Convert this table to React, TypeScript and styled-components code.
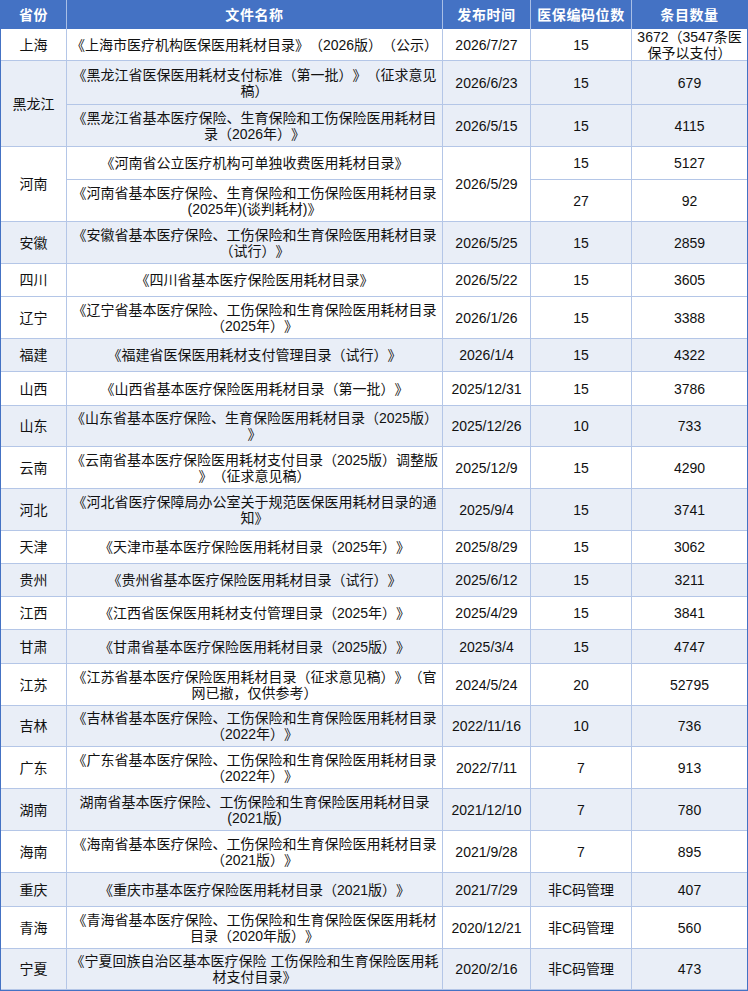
import { Fragment } from "react";
import styled, { createGlobalStyle } from "styled-components";

const GlobalStyle = createGlobalStyle`
  html, body {
    margin: 0;
    padding: 0;
    background: #ffffff;
  }
`;

type Sub = {
  title: string[];
  date?: string;
  code: string;
  count: string[];
  h: number;
};

type Entry = {
  province: string;
  stripe: boolean;
  sharedDate?: string;
  subs: Sub[];
};

const HEAD_H = 29;

const data: Entry[] = [
  {
    province: "上海",
    stripe: false,
    subs: [
      {
        title: ["《上海市医疗机构医保医用耗材目录》（2026版）（公示）"],
        date: "2026/7/27",
        code: "15",
        count: ["3672（3547条医", "保予以支付）"],
        h: 32,
      },
    ],
  },
  {
    province: "黑龙江",
    stripe: true,
    subs: [
      {
        title: ["《黑龙江省医保医用耗材支付标准（第一批）》（征求意见", "稿）"],
        date: "2026/6/23",
        code: "15",
        count: ["679"],
        h: 44,
      },
      {
        title: ["《黑龙江省基本医疗保险、生育保险和工伤保险医用耗材目", "录（2026年）》"],
        date: "2026/5/15",
        code: "15",
        count: ["4115"],
        h: 42,
      },
    ],
  },
  {
    province: "河南",
    stripe: false,
    sharedDate: "2026/5/29",
    subs: [
      {
        title: ["《河南省公立医疗机构可单独收费医用耗材目录》"],
        code: "15",
        count: ["5127"],
        h: 33,
      },
      {
        title: ["《河南省基本医疗保险、生育保险和工伤保险医用耗材目录", "(2025年)(谈判耗材)》"],
        code: "27",
        count: ["92"],
        h: 42,
      },
    ],
  },
  {
    province: "安徽",
    stripe: true,
    subs: [
      {
        title: ["《安徽省基本医疗保险、工伤保险和生育保险医用耗材目录", "（试行）》"],
        date: "2026/5/25",
        code: "15",
        count: ["2859"],
        h: 42,
      },
    ],
  },
  {
    province: "四川",
    stripe: false,
    subs: [
      {
        title: ["《四川省基本医疗保险医用耗材目录》"],
        date: "2026/5/22",
        code: "15",
        count: ["3605"],
        h: 33,
      },
    ],
  },
  {
    province: "辽宁",
    stripe: false,
    subs: [
      {
        title: ["《辽宁省基本医疗保险、工伤保险和生育保险医用耗材目录", "（2025年）》"],
        date: "2026/1/26",
        code: "15",
        count: ["3388"],
        h: 42,
      },
    ],
  },
  {
    province: "福建",
    stripe: true,
    subs: [
      {
        title: ["《福建省医保医用耗材支付管理目录（试行）》"],
        date: "2026/1/4",
        code: "15",
        count: ["4322"],
        h: 33,
      },
    ],
  },
  {
    province: "山西",
    stripe: false,
    subs: [
      {
        title: ["《山西省基本医疗保险医用耗材目录（第一批）》"],
        date: "2025/12/31",
        code: "15",
        count: ["3786"],
        h: 34,
      },
    ],
  },
  {
    province: "山东",
    stripe: true,
    subs: [
      {
        title: ["《山东省基本医疗保险、生育保险医用耗材目录（2025版）", "》"],
        date: "2025/12/26",
        code: "10",
        count: ["733"],
        h: 41,
      },
    ],
  },
  {
    province: "云南",
    stripe: false,
    subs: [
      {
        title: ["《云南省基本医疗保险医用耗材支付目录（2025版）调整版", "》（征求意见稿）"],
        date: "2025/12/9",
        code: "15",
        count: ["4290"],
        h: 42,
      },
    ],
  },
  {
    province: "河北",
    stripe: true,
    subs: [
      {
        title: ["《河北省医疗保障局办公室关于规范医保医用耗材目录的通", "知》"],
        date: "2025/9/4",
        code: "15",
        count: ["3741"],
        h: 42,
      },
    ],
  },
  {
    province: "天津",
    stripe: false,
    subs: [
      {
        title: ["《天津市基本医疗保险医用耗材目录（2025年）》"],
        date: "2025/8/29",
        code: "15",
        count: ["3062"],
        h: 33,
      },
    ],
  },
  {
    province: "贵州",
    stripe: true,
    subs: [
      {
        title: ["《贵州省基本医疗保险医用耗材目录（试行）》"],
        date: "2025/6/12",
        code: "15",
        count: ["3211"],
        h: 33,
      },
    ],
  },
  {
    province: "江西",
    stripe: false,
    subs: [
      {
        title: ["《江西省医保医用耗材支付管理目录（2025年）》"],
        date: "2025/4/29",
        code: "15",
        count: ["3841"],
        h: 33,
      },
    ],
  },
  {
    province: "甘肃",
    stripe: true,
    subs: [
      {
        title: ["《甘肃省基本医疗保险医用耗材目录（2025版）》"],
        date: "2025/3/4",
        code: "15",
        count: ["4747"],
        h: 34,
      },
    ],
  },
  {
    province: "江苏",
    stripe: false,
    subs: [
      {
        title: ["《江苏省基本医疗保险医用耗材目录（征求意见稿）》（官", "网已撤，仅供参考）"],
        date: "2024/5/24",
        code: "20",
        count: ["52795"],
        h: 42,
      },
    ],
  },
  {
    province: "吉林",
    stripe: true,
    subs: [
      {
        title: ["《吉林省基本医疗保险、工伤保险和生育保险医用耗材目录", "（2022年）》"],
        date: "2022/11/16",
        code: "10",
        count: ["736"],
        h: 41,
      },
    ],
  },
  {
    province: "广东",
    stripe: false,
    subs: [
      {
        title: ["《广东省基本医疗保险、工伤保险和生育保险医用耗材目录", "（2022年）》"],
        date: "2022/7/11",
        code: "7",
        count: ["913"],
        h: 42,
      },
    ],
  },
  {
    province: "湖南",
    stripe: true,
    subs: [
      {
        title: ["湖南省基本医疗保险、工伤保险和生育保险医用耗材目录", "(2021版)"],
        date: "2021/12/10",
        code: "7",
        count: ["780"],
        h: 42,
      },
    ],
  },
  {
    province: "海南",
    stripe: false,
    subs: [
      {
        title: ["《海南省基本医疗保险、工伤保险和生育保险医用耗材目录", "（2021版）》"],
        date: "2021/9/28",
        code: "7",
        count: ["895"],
        h: 42,
      },
    ],
  },
  {
    province: "重庆",
    stripe: true,
    subs: [
      {
        title: ["《重庆市基本医疗保险医用耗材目录（2021版）》"],
        date: "2021/7/29",
        code: "非C码管理",
        count: ["407"],
        h: 34,
      },
    ],
  },
  {
    province: "青海",
    stripe: false,
    subs: [
      {
        title: ["《青海省基本医疗保险、工伤保险和生育保险医保医用耗材", "目录（2020年版）》"],
        date: "2020/12/21",
        code: "非C码管理",
        count: ["560"],
        h: 42,
      },
    ],
  },
  {
    province: "宁夏",
    stripe: true,
    subs: [
      {
        title: ["《宁夏回族自治区基本医疗保险 工伤保险和生育保险医用耗", "材支付目录》"],
        date: "2020/2/16",
        code: "非C码管理",
        count: ["473"],
        h: 41,
      },
    ],
  },
];

const headers = ["省份", "文件名称", "发布时间", "医保编码位数", "条目数量"];

// header + one track per sub-row, heights taken from the sheet
const rowTemplate = [HEAD_H, ...data.flatMap((g) => g.subs.map((s) => s.h))]
  .map((h) => `${h}px`)
  .join(" ");

const Sheet = styled.div<{ $rows: string }>`
  display: grid;
  grid-template-columns: 66px 376px 88px 101px 115px;
  grid-template-rows: ${(p) => p.$rows};
  width: 748px;
  box-sizing: border-box;
  border-left: 1px solid #4472c4;
  border-right: 1px solid #4472c4;
  border-bottom: 1px solid #4472c4;
  font-family: "Liberation Sans", "Noto Sans CJK SC", sans-serif;
  font-size: 14px;
  line-height: 16px;
  color: #111111;
  text-spacing-trim: space-all;
`;

const Cell = styled.div<{ $stripe?: boolean; $span?: number; $last?: boolean }>`
  display: flex;
  flex-direction: column;
  align-items: center;
  justify-content: center;
  text-align: center;
  white-space: nowrap;
  box-sizing: border-box;
  grid-row: ${(p) => (p.$span ? `span ${p.$span}` : "auto")};
  background: ${(p) => (p.$stripe ? "#e9eef7" : "#ffffff")};
  border-bottom: 1px solid #b4c6e7;
  border-right: ${(p) => (p.$last ? "none" : "1px solid #b4c6e7")};
`;

const HeadCell = styled.div<{ $last?: boolean }>`
  display: flex;
  align-items: center;
  justify-content: center;
  box-sizing: border-box;
  background: #4472c4;
  color: #ffffff;
  font-weight: 700;
  letter-spacing: 0.6px;
  white-space: nowrap;
  border-right: ${(p) => (p.$last ? "none" : "1px solid #a9bfe6")};
`;

const Line = styled.span`
  display: block;
`;

const Lines = ({ items }: { items: string[] }) => (
  <>
    {items.map((t, i) => (
      <Line key={i}>{t}</Line>
    ))}
  </>
);

export default function App() {
  return (
    <>
      <GlobalStyle />
      <Sheet $rows={rowTemplate}>
        {headers.map((h, i) => (
          <HeadCell key={h} $last={i === headers.length - 1}>
            {h}
          </HeadCell>
        ))}
        {data.map((g) =>
          g.subs.map((s, i) => (
            <Fragment key={`${g.province}-${i}`}>
              {i === 0 && (
                <Cell $stripe={g.stripe} $span={g.subs.length}>
                  {g.province}
                </Cell>
              )}
              <Cell $stripe={g.stripe}>
                <Lines items={s.title} />
              </Cell>
              {g.sharedDate ? (
                i === 0 && (
                  <Cell $stripe={g.stripe} $span={g.subs.length}>
                    {g.sharedDate}
                  </Cell>
                )
              ) : (
                <Cell $stripe={g.stripe}>{s.date}</Cell>
              )}
              <Cell $stripe={g.stripe}>{s.code}</Cell>
              <Cell $stripe={g.stripe} $last>
                <Lines items={s.count} />
              </Cell>
            </Fragment>
          ))
        )}
      </Sheet>
    </>
  );
}
